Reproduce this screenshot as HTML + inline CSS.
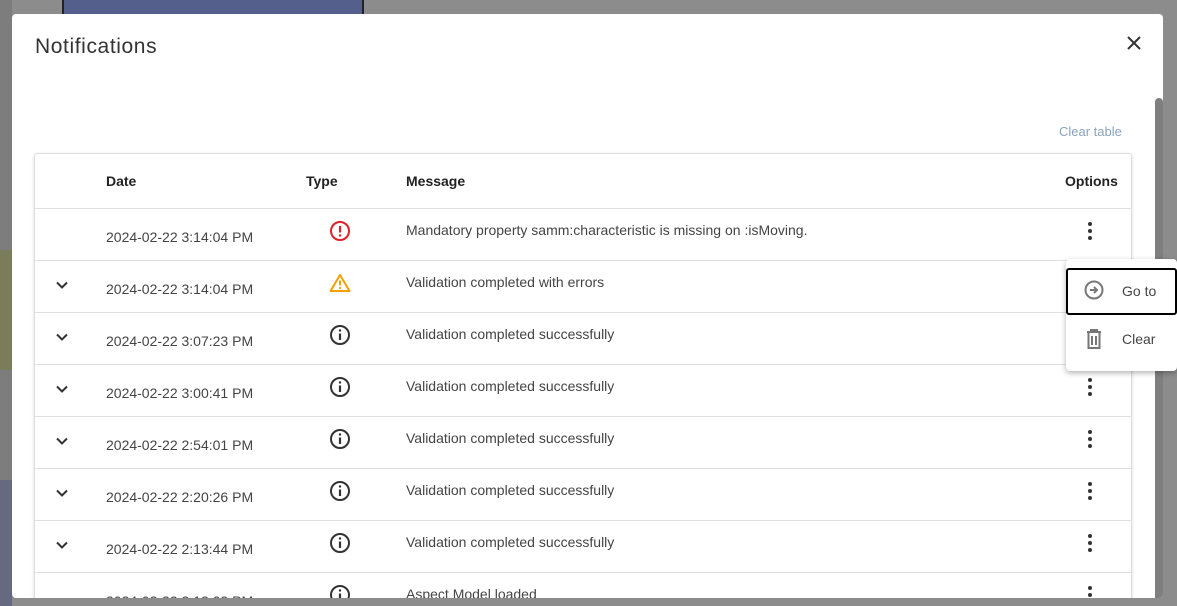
<!DOCTYPE html>
<html><head><style>
body{margin:0;width:1177px;height:606px;overflow:hidden;background:#8c8c8c;font-family:"Liberation Sans",Arial,sans-serif;position:relative}
.bg1{position:absolute;left:62px;top:0;width:298px;height:14px;background:#545f8c;border-left:2px solid #222;border-right:2px solid #222}
.bgl{position:absolute;left:0;top:0;width:12px;height:606px;background:#7d7d7d}
.bgy{position:absolute;left:0;top:250px;width:12px;height:120px;background:#7b7d5a}
.bgb{position:absolute;left:0;top:480px;width:12px;height:126px;background:#666a80}
.dlg{position:absolute;left:12px;top:14px;width:1151px;height:584px;background:#fff;border-radius:4px;overflow:hidden}
.title{position:absolute;left:23px;top:21px;font-size:21px;color:#333;letter-spacing:.6px}
.close{position:absolute;left:1114px;top:21px}
.clear{position:absolute;left:1047px;top:110px;font-size:13px;color:#8ba3bf}
.tbl{position:absolute;left:22px;top:139px;width:1096px;height:460px;border:1px solid #ddd;border-radius:3px;box-shadow:0 1px 3px rgba(0,0,0,.15)}
.hd{position:absolute;top:0;height:54px;width:100%;border-bottom:1px solid #e0e0e0;font-size:14px;font-weight:bold;color:#222}
.hd span{position:absolute;top:19px}
.row{position:absolute;left:0;width:100%;height:51px;border-bottom:1px solid #e0e0e0;font-size:14px;color:#444}
.d{position:absolute;left:71px;top:20px}
.m{position:absolute;left:371px;top:13px}
.ic{position:absolute;left:294px;top:11px}
.ch{position:absolute;left:19px;top:16px}
.dots{position:absolute;left:1052px;top:12px}
.sb{position:absolute;left:1143px;top:84px;width:8px;height:500px;background:#7f7f7f;border-radius:4px 4px 0 0}
.menu{position:absolute;left:1066px;top:259px;width:111px;height:112px;background:#fff;border-radius:4px;box-shadow:0 2px 6px rgba(0,0,0,.3)}
.goto{position:absolute;left:0;top:9px;width:107px;height:43px;border:2px solid #000;border-radius:3px}
.mi{position:absolute;font-size:14px;color:#444}
</style></head><body>
<div class="bgl"></div><div class="bgy"></div><div class="bgb"></div><div class="bg1"></div>
<div class="dlg">
<div class="title">Notifications</div>
<svg class="close" width="16" height="16" viewBox="0 0 16 16"><path d="M2 2L14 14M14 2L2 14" stroke="#333" stroke-width="2"/></svg>
<div class="clear">Clear table</div>
<div class="tbl">
<div class="hd"><span style="left:71px">Date</span><span style="left:271px">Type</span><span style="left:371px">Message</span><span style="left:1030px">Options</span></div>
<div id="rows"></div>
</div>
<div class="sb"></div>
</div>
<div class="menu">
<div class="goto"></div>
<svg style="position:absolute;left:18px;top:21px" width="20" height="20" viewBox="0 0 20 20"><circle cx="10" cy="10" r="8.5" fill="none" stroke="#777" stroke-width="2"/><path d="M6 10H13M10 7L13 10L10 13" fill="none" stroke="#777" stroke-width="2"/></svg>
<div class="mi" style="left:56px;top:24px">Go to</div>
<svg style="position:absolute;left:20px;top:70px" width="16" height="20" viewBox="0 0 16 20"><path d="M1 3H15M5 3V1H11V3M2.5 4V19H13.5V4M6 7V16M10 7V16" fill="none" stroke="#777" stroke-width="2"/></svg>
<div class="mi" style="left:56px;top:72px">Clear</div>
</div>
<script>
var data=[["2024-02-22 3:14:04 PM","e","Mandatory property samm:characteristic is missing on :isMoving."],["2024-02-22 3:14:04 PM","w","Validation completed with errors"],["2024-02-22 3:07:23 PM","i","Validation completed successfully"],["2024-02-22 3:00:41 PM","i","Validation completed successfully"],["2024-02-22 2:54:01 PM","i","Validation completed successfully"],["2024-02-22 2:20:26 PM","i","Validation completed successfully"],["2024-02-22 2:13:44 PM","i","Validation completed successfully"],["2024-02-22 2:12:03 PM","i","Aspect Model loaded"]];
var h="";data.forEach(function(r,k){var top=55+k*52;var ic;
if(r[1]=="e")ic='<svg class="ic" width="22" height="22" viewBox="0 0 22 22"><circle cx="11" cy="11" r="9" fill="none" stroke="#e0202a" stroke-width="2"/><path d="M11 6V12.5" stroke="#e0202a" stroke-width="2.2"/><circle cx="11" cy="15.5" r="1.2" fill="#e0202a"/></svg>';
else if(r[1]=="w")ic='<svg class="ic" width="22" height="22" viewBox="0 0 22 22"><path d="M11 3L20.5 19H1.5Z" fill="none" stroke="#f5a000" stroke-width="2" stroke-linejoin="round"/><path d="M11 8.5V13.5" stroke="#f5a000" stroke-width="2"/><circle cx="11" cy="16" r="1.1" fill="#f5a000"/></svg>';
else ic='<svg class="ic" width="22" height="22" viewBox="0 0 22 22"><circle cx="11" cy="11" r="9" fill="none" stroke="#333" stroke-width="2"/><path d="M11 9.5V16" stroke="#333" stroke-width="2.2"/><circle cx="11" cy="6.5" r="1.2" fill="#333"/></svg>';
h+='<div class="row" style="top:'+top+'px">'+(k>0&&k<7?'<svg class="ch" width="16" height="16" viewBox="0 0 16 16"><path d="M3 5.5L8 10.5L13 5.5" fill="none" stroke="#333" stroke-width="2"/></svg>':'')+'<div class="d">'+r[0]+'</div>'+ic+'<div class="m">'+r[2]+'</div><svg class="dots" width="6" height="20" viewBox="0 0 6 20"><circle cx="3" cy="3" r="2" fill="#333"/><circle cx="3" cy="10" r="2" fill="#333"/><circle cx="3" cy="17" r="2" fill="#333"/></svg></div>';});
document.getElementById("rows").innerHTML=h;
</script>
</body></html>
